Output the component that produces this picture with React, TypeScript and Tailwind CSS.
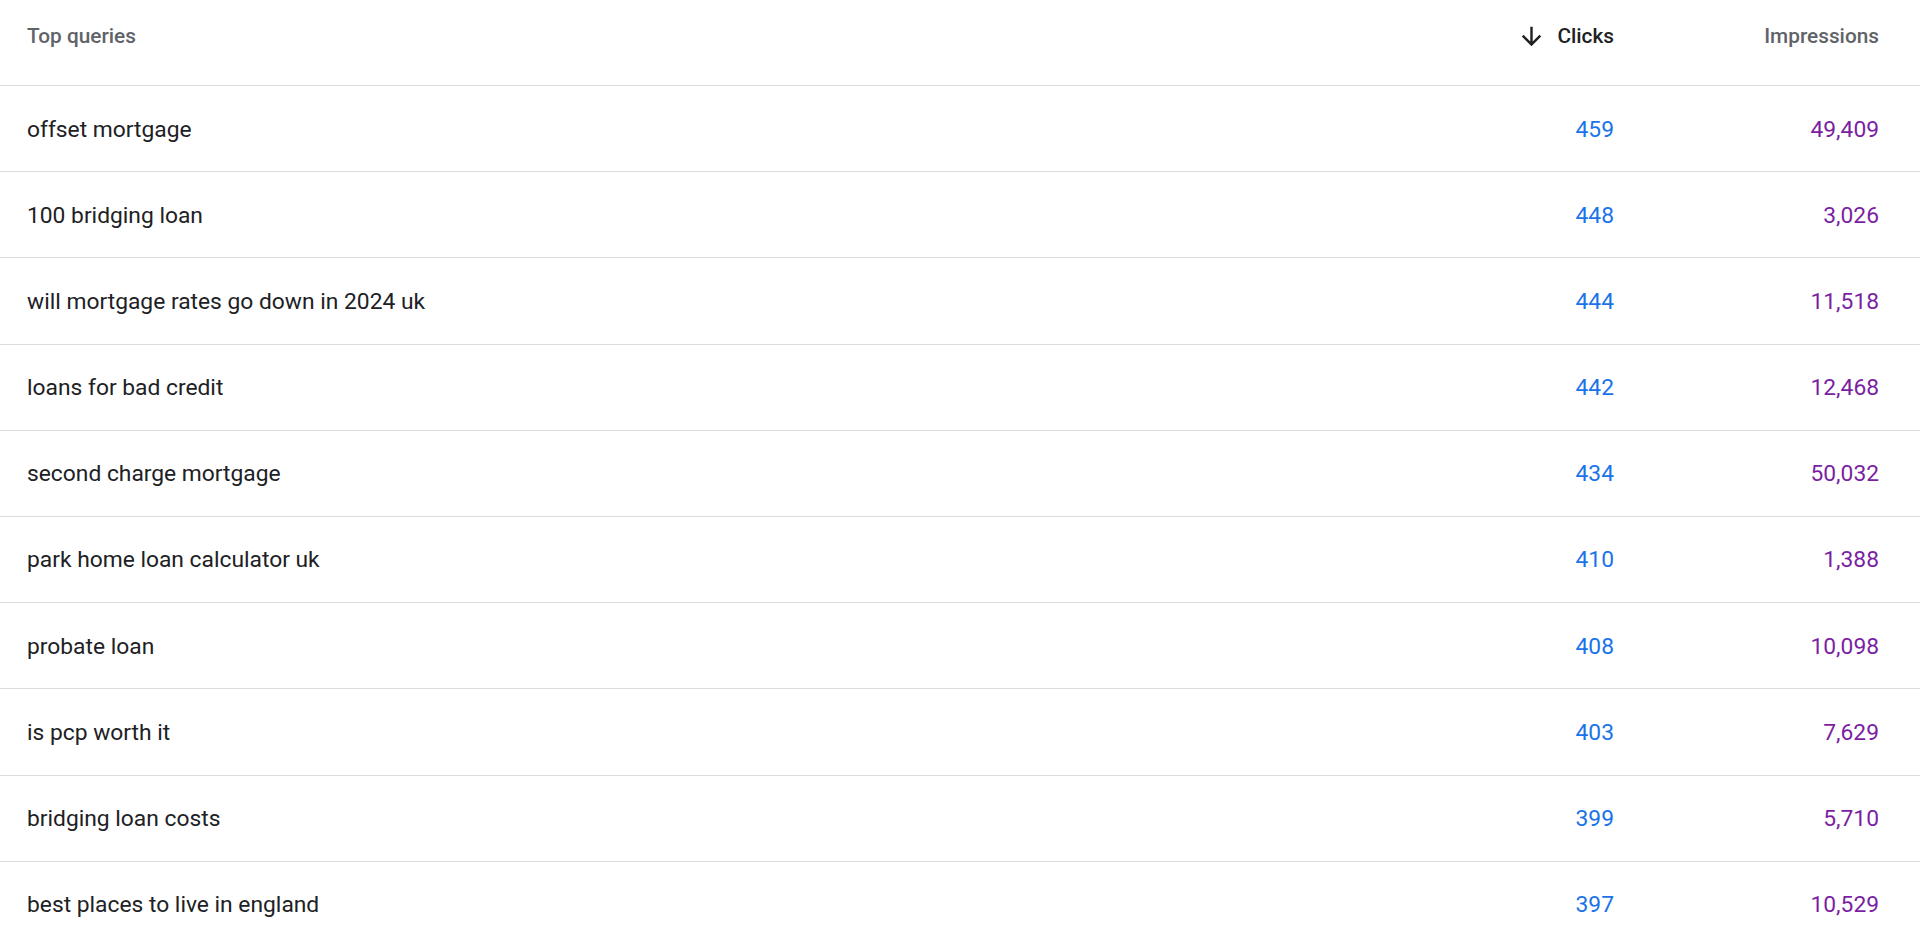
import React from "react";

interface QueryRow {
  query: string;
  clicks: string;
  impressions: string;
}

const rows: QueryRow[] = [
  { query: "offset mortgage", clicks: "459", impressions: "49,409" },
  { query: "100 bridging loan", clicks: "448", impressions: "3,026" },
  { query: "will mortgage rates go down in 2024 uk", clicks: "444", impressions: "11,518" },
  { query: "loans for bad credit", clicks: "442", impressions: "12,468" },
  { query: "second charge mortgage", clicks: "434", impressions: "50,032" },
  { query: "park home loan calculator uk", clicks: "410", impressions: "1,388" },
  { query: "probate loan", clicks: "408", impressions: "10,098" },
  { query: "is pcp worth it", clicks: "403", impressions: "7,629" },
  { query: "bridging loan costs", clicks: "399", impressions: "5,710" },
  { query: "best places to live in england", clicks: "397", impressions: "10,529" },
];

const ArrowDown = () => (
  <svg width="29" height="29" viewBox="0 0 24 24" className="fill-[#202124]">
    <path d="M20 12l-1.41-1.41L13 16.17V4h-2v12.17l-5.58-5.59L4 12l8 8 8-8z" />
  </svg>
);

const App = () => {
  return (
    <div className="bg-white min-h-screen w-full font-['Roboto',sans-serif] overflow-hidden">
      {/* Header */}
      <div className="grid grid-cols-[1fr_200px_265px] h-[86px] pr-[41px] pl-[27px] border-b border-[#dadce0] text-[20.8px] font-medium">
        <div className="text-[#5f6368] pt-[22px] leading-[28px]">Top queries</div>
        <div className="flex items-start justify-end pt-[22px] text-[#202124]">
          <ArrowDown />
          <span className="ml-[11px] leading-[28px]">Clicks</span>
        </div>
        <div className="text-right text-[#5f6368] pt-[22px] leading-[28px]">Impressions</div>
      </div>

      {/* Rows */}
      {rows.map((row) => (
        <div
          key={row.query}
          className="grid grid-cols-[1fr_200px_265px] items-center h-[86.2px] pt-[2px] pr-[41px] pl-[27px] border-b border-[#dadce0] text-[22.8px]"
        >
          <div className="text-[#202124]">{row.query}</div>
          <div className="text-right text-[#1a73e8]">{row.clicks}</div>
          <div className="text-right text-[#7b1fa2]">{row.impressions}</div>
        </div>
      ))}
    </div>
  );
};

export default App;
